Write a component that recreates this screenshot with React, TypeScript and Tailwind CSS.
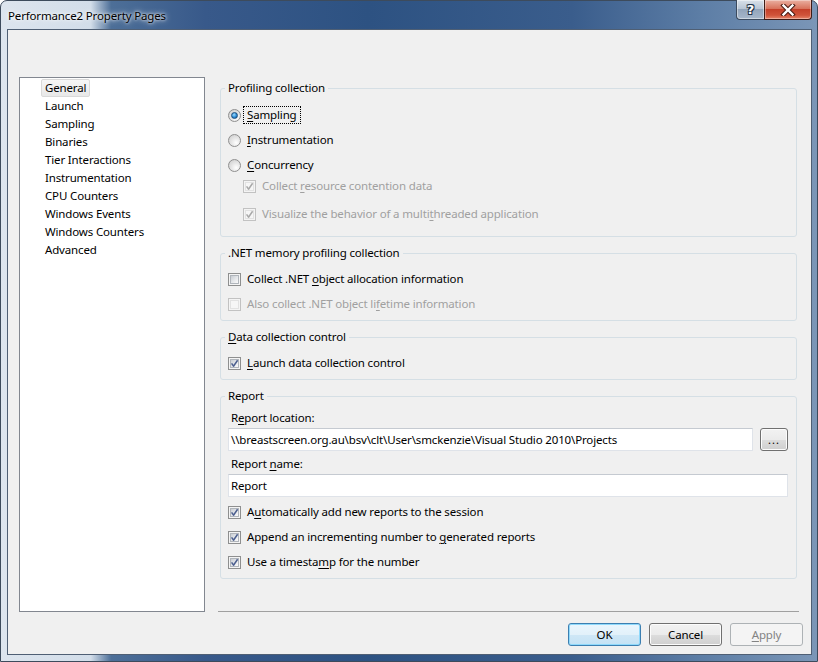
import React from "react";

const ui = "font-['Noto_Sans',sans-serif] text-[11.5px] tracking-[-0.15px] leading-[16px] text-black";

const pages = [
  "General",
  "Launch",
  "Sampling",
  "Binaries",
  "Tier Interactions",
  "Instrumentation",
  "CPU Counters",
  "Windows Events",
  "Windows Counters",
  "Advanced",
];

// access-key underline
function U({ children }: { children: React.ReactNode }) {
  return <span className="underline decoration-1 underline-offset-[2px]">{children}</span>;
}

function CheckBox({ checked = false, disabled = false }: { checked?: boolean; disabled?: boolean }) {
  const outer = disabled ? "border-[#c2c2c2] bg-[#f4f4f4]" : "border-[#8e8f8f] bg-[#f4f4f4]";
  const inner = disabled
    ? "border-[#e2e2e2] bg-[#f6f6f6]"
    : "border-[#b0b5bb] bg-[linear-gradient(135deg,#c9cdd3,#e6e8eb_55%,#fafafa)]";
  return (
    <span className={`relative flex h-[13px] w-[13px] shrink-0 items-center justify-center border ${outer}`}>
      <span className={`h-[9px] w-[9px] border ${inner}`} />
      {checked && (
        <svg className="absolute left-0 top-0" width="11" height="11" viewBox="0 0 11 11">
          <path
            d="M2.6 5.4 L4.5 8.2 L8.6 2.3"
            fill="none"
            stroke={disabled ? "#a8a8a8" : "#4c5f8f"}
            strokeWidth="1.5"
            strokeLinejoin="round"
          />
        </svg>
      )}
    </span>
  );
}

function Radio({ checked = false }: { checked?: boolean }) {
  return (
    <span className="flex h-[13px] w-[13px] shrink-0 items-center justify-center rounded-full border border-[#8f8f8f] bg-[radial-gradient(circle_at_65%_70%,#ffffff,#e6e6e6_45%,#c9c9c9)]">
      {checked && (
        <span className="h-[7px] w-[7px] rounded-full border border-[#1d4f7e] bg-[radial-gradient(circle_at_40%_35%,#9fdcff,#2a8ad4_55%,#0f4d86)]" />
      )}
    </span>
  );
}

function CheckRow({
  checked,
  disabled,
  className = "",
  children,
}: {
  checked?: boolean;
  disabled?: boolean;
  className?: string;
  children: React.ReactNode;
}) {
  return (
    <div className={`flex h-[18px] items-center gap-[6px] ${className}`}>
      <CheckBox checked={checked} disabled={disabled} />
      <span className={disabled ? "text-[#a0a0a0]" : ""}>{children}</span>
    </div>
  );
}

function RadioRow({
  checked,
  focused,
  className = "",
  children,
}: {
  checked?: boolean;
  focused?: boolean;
  className?: string;
  children: React.ReactNode;
}) {
  return (
    <div className={`flex h-[18px] items-center gap-[2px] ${className}`}>
      <Radio checked={checked} />
      <span
        className={`flex h-[18px] items-center border px-[3px] ${
          focused ? "border-dotted border-black" : "border-transparent"
        }`}
      >
        <span>{children}</span>
      </span>
    </div>
  );
}

function Group({
  title,
  className = "",
  children,
}: {
  title: React.ReactNode;
  className?: string;
  children: React.ReactNode;
}) {
  return (
    <fieldset className={`mx-[2px] rounded-[3px] border border-[#d5dfe5] ${className}`}>
      <legend className="ml-[4px] px-[3px] leading-[16px]">{title}</legend>
      {children}
    </fieldset>
  );
}

function WinButton({
  children,
  variant = "normal",
  className = "",
}: {
  children: React.ReactNode;
  variant?: "normal" | "default" | "disabled";
  className?: string;
}) {
  const look =
    variant === "default"
      ? "border-[#3c7fb1] bg-[linear-gradient(#eaf6fd,#e2f1fa_50%,#cfe7f6_51%,#c4e2f5)] shadow-[inset_0_0_0_1px_#8fd9fb] text-black"
      : variant === "disabled"
        ? "border-[#adb2b5] bg-[#f4f4f4] text-[#838383]"
        : "border-[#707070] bg-[linear-gradient(#f2f2f2,#ebebeb_50%,#dddddd_51%,#cfcfcf)] shadow-[inset_0_0_0_1px_#fcfcfc] text-black";
  return (
    <div className={`flex items-center justify-center rounded-[3px] border ${look} ${className}`}>
      {children}
    </div>
  );
}

function TitleButtons() {
  return (
    <div className="mr-[5px] -mt-px ml-auto flex h-[20px]">
      <div className="flex w-[28px] items-center justify-center rounded-bl-[4px] border border-t-0 border-r-0 border-[#3b4a5e] bg-[linear-gradient(#d9e1ea,#b9c6d5_45%,#93a5bb_50%,#a6b7cb)] shadow-[inset_0_0_0_1px_rgba(255,255,255,0.45)]">
        <span className="font-['DejaVu_Sans',sans-serif] text-[13px] font-bold leading-none tracking-normal text-white [text-shadow:0_0_1px_#233247,1px_1px_0_#233247,-1px_-1px_0_#233247,1px_-1px_0_#233247,-1px_1px_0_#233247]">
          ?
        </span>
      </div>
      <div className="flex w-[48px] items-center justify-center rounded-br-[4px] border border-t-0 border-[#3e1c17] bg-[linear-gradient(#eab0a1,#d8735c_45%,#c5412a_50%,#d0543a_80%,#e5866a)] shadow-[inset_0_0_0_1px_rgba(255,255,255,0.35)]">
        <svg width="16" height="12" viewBox="0 0 16 12">
          <path d="M3.5 1.5 L12.5 10.5 M12.5 1.5 L3.5 10.5" stroke="#4a1b12" strokeWidth="4.4" strokeLinecap="square" />
          <path d="M3.5 1.5 L12.5 10.5 M12.5 1.5 L3.5 10.5" stroke="#ffffff" strokeWidth="2.4" strokeLinecap="square" />
        </svg>
      </div>
    </div>
  );
}

export default function App() {
  const location =
    "\\\\breastscreen.org.au\\bsv\\clt\\User\\smckenzie\\Visual Studio 2010\\Projects";

  return (
    <div className={`${ui} h-[662px] w-[818px] overflow-hidden bg-white`}>
      <div className="flex h-full w-full flex-col rounded-t-[7px] border border-[#3d4b5c] bg-[linear-gradient(90deg,#dde5ee_0%,#d2dde9_11%,#4d6f98_13.5%,#38598a_25%,#2d5282_45%,#3a5d8c_70%,#5d7ea6_86%,#7b96b7_100%)]">
        {/* Title bar */}
        <div className="flex h-[28px] shrink-0 items-start">
          <span className="ml-[7px] mt-[7px] [text-shadow:0_0_6px_#ffffff,0_0_3px_#ffffff]">
            Performance2 Property Pages
          </span>
          <TitleButtons />
        </div>

        {/* Client area */}
        <div className="mb-[6px] ml-[6px] mr-[5px] flex flex-1 flex-col border border-[#4f5f74] bg-[#f0f0f0]">
          <div className="flex pt-[47px]">
            {/* Page list */}
            <div className="ml-[11px] h-[535px] w-[186px] shrink-0 border border-[#828790] bg-white pl-[21px] pt-px">
              {pages.map((p, i) => (
                <div key={p} className="flex h-[18px] items-center">
                  <span
                    className={`flex h-[18px] items-center rounded-[2px] border px-[3px] ${
                      i === 0
                        ? "border-[#d9d9d9] bg-[linear-gradient(#f6f6f6,#e8e8e8)]"
                        : "border-transparent"
                    }`}
                  >
                    {p}
                  </span>
                </div>
              ))}
            </div>

            {/* Property page */}
            <div className="ml-[13px] flex h-[535px] w-[581px] flex-col pt-[3px]">
              <Group title="Profiling collection">
                <div className="pl-[7px] pr-[8px] pt-[10px] pb-[13px]">
                  <RadioRow checked focused>
                    <U>S</U>ampling
                  </RadioRow>
                  <RadioRow className="mt-[7px]">
                    <U>I</U>nstrumentation
                  </RadioRow>
                  <RadioRow className="mt-[7px]">
                    <U>C</U>oncurrency
                  </RadioRow>
                  <CheckRow checked disabled className="ml-[15px] mt-[3px]">
                    Collect <U>r</U>esource contention data
                  </CheckRow>
                  <CheckRow checked disabled className="ml-[15px] mt-[10px]">
                    Visualize the behavior of a multi<U>t</U>hreaded application
                  </CheckRow>
                </div>
              </Group>

              <Group title=".NET memory profiling collection" className="mt-[8px]">
                <div className="pl-[7px] pr-[8px] pt-[9px] pb-[7px]">
                  <CheckRow>
                    Collect .NET <U>o</U>bject allocation information
                  </CheckRow>
                  <CheckRow disabled className="mt-[7px]">
                    Also collect .NET object li<U>f</U>etime information
                  </CheckRow>
                </div>
              </Group>

              <Group
                title={
                  <>
                    <U>D</U>ata collection control
                  </>
                }
                className="mt-[8px]"
              >
                <div className="pl-[7px] pr-[8px] pt-[9px] pb-[7px]">
                  <CheckRow checked>
                    <U>L</U>aunch data collection control
                  </CheckRow>
                </div>
              </Group>

              <Group title="Report" className="mt-[8px]">
                <div className="pl-[7px] pr-[8px] pt-[5px] pb-[7px]">
                  <div className="flex h-[18px] items-center pl-[3px]">
                    <span>
                      R<U>e</U>port location:
                    </span>
                  </div>
                  <div className="mt-px flex gap-[7px]">
                    <div className="flex h-[23px] flex-1 items-center border border-[#dfe3e9] border-t-[#c5cad1] bg-white px-[2px]">
                      {location}
                    </div>
                    <WinButton className="h-[23px] w-[28px] text-[11px] tracking-[1px]">...</WinButton>
                  </div>
                  <div className="mt-[4px] flex h-[18px] items-center pl-[3px]">
                    <span>
                      Report <U>n</U>ame:
                    </span>
                  </div>
                  <div className="mt-px flex h-[23px] items-center border border-[#dfe3e9] border-t-[#c5cad1] bg-white px-[2px]">
                    Report
                  </div>
                  <CheckRow checked className="mt-[6px]">
                    A<U>u</U>tomatically add new reports to the session
                  </CheckRow>
                  <CheckRow checked className="mt-[7px]">
                    Append an incrementing number to <U>g</U>enerated reports
                  </CheckRow>
                  <CheckRow checked className="mt-[7px]">
                    Use a timesta<U>m</U>p for the number
                  </CheckRow>
                </div>
              </Group>

              <div className="mt-auto h-px bg-[#a0a0a0]" />
            </div>
          </div>

          {/* Dialog buttons */}
          <div className="mt-[11px] flex justify-end gap-[8px] pr-[8px]">
            <WinButton variant="default" className="h-[23px] w-[73px]">
              OK
            </WinButton>
            <WinButton className="h-[23px] w-[73px]">Cancel</WinButton>
            <WinButton variant="disabled" className="h-[23px] w-[73px]">
              <span>
                <U>A</U>pply
              </span>
            </WinButton>
          </div>
        </div>
      </div>
    </div>
  );
}
